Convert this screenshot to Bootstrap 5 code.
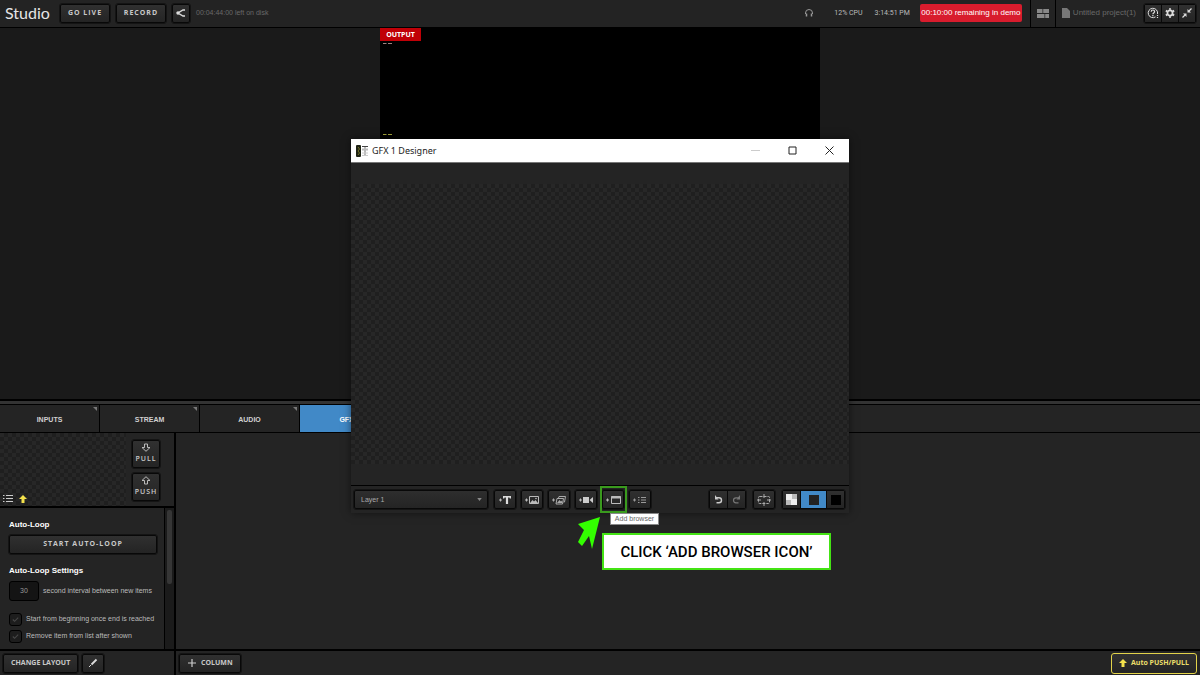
<!DOCTYPE html>
<html lang="en">
<head>
<meta charset="utf-8">
<meta name="viewport" content="width=device-width, initial-scale=1">
<title>Studio</title>
<link href="https://cdn.jsdelivr.net/npm/bootstrap@5.3.0/dist/css/bootstrap.min.css" rel="stylesheet">
<style>
  body { font-family: "Liberation Sans", sans-serif; font-size: 7px; line-height: 10px; color: #bbb; background: #1a1a1a; }
  svg { display: block; flex: none; }
  .topbar { height: 28px; padding-bottom: 1px; background: #232323; border-bottom: 1px solid #000; }
  .topbar-left { gap: 6px; padding-left: 5px; }
  .brand-name { font: 16px/20px Lato, sans-serif; color: #e6e6e6; width: 49px; }
  .topbar-status { gap: 12px; margin-right: 10px; font-family: Roboto, sans-serif; }
  .topbar-project { gap: 3px; margin: 0 8px 0 6px; font-size: 8px; }
  .tool { font: 700 7px/10px "Open Sans", sans-serif; color: #c8c8c8; background: linear-gradient(#303030, #242424); border: 1px solid #080808; border-radius: 2px; padding: 0; display: flex; align-items: center; justify-content: center; height: 19px; gap: 4px; outline: 1px solid #141414; }
  .tracked { letter-spacing: 1px; }
  .w-live { width: 50px; }
  .w-icon { width: 18px; }
  .w-tool { width: 22px; }
  .dim { color: #696969; }
  .demo { font-size: 8px; line-height: 18px; color: #fff; background: #d81c2d; border-radius: 2px; width: 102px; }
  .top-cell { width: 26px; border-left: 1px solid #000; border-right: 1px solid #000; margin-bottom: -1px; }
  .group { border: 1px solid #080808; border-radius: 2px; display: flex; background: #080808; gap: 1px; outline: 1px solid #141414; }
  .group .tool { border: 0; border-radius: 0; outline: 0; height: 17px; width: 17px; }
  .group .slim { width: 16px; }
  .stage { flex: 372 1 0; }
  .output { width: 440px; height: 124px; background: #000; }
  .output-tag { font: 700 7px/13px "Open Sans", sans-serif; color: #fff; background: #c00007; width: 41px; }
  .splitter { height: 6px; background: #333; border-top: 2px solid #000; border-bottom: 1px solid #000; }
  .tabs { height: 28px; background: #242424; border-bottom: 1px solid #000; }
  .tabs button { width: 100px; border: 0; border-right: 1px solid #000; background: #242424; color: #d0d0d0; font: 700 7px/10px "Liberation Sans", sans-serif; position: relative; padding: 3px 0 0; }
  .tabs button::after { content: ""; position: absolute; top: 2px; right: 2px; border: 2px solid #777; border-left-color: transparent; border-bottom-color: transparent; }
  .tabs button.active { background: #4189c7; color: #fff; }
  .work { flex: 217 1 0; background: #242424; min-height: 0; }
  .side { width: 176px; border-right: 2px solid #000; }
  .checker { background: conic-gradient(#1f1f1f 25%, #272727 0 50%, #1f1f1f 0 75%, #272727 0) 0 0 / 8px 8px; }
  .preview { height: 75px; border-bottom: 2px solid #000; }
  .preview .checker { width: 126px; gap: 6px; padding: 0 0 3px 3px; }
  .preview-actions { gap: 5px; padding: 7px 0 0 6px; }
  .preview .tool { width: 28px; height: 28px; flex-direction: column; gap: 2px; font-weight: 600; }
  .settings { min-height: 0; }
  .settings-body { padding: 12px 7px 0 9px; }
  .settings h2 { font-size: 8px; line-height: 10px; font-weight: 700; color: #fff; margin: 0; }
  .start { margin: 5px 0 12px; }
  .num { width: 30px; height: 20px; background: #141414; border: 1px solid #000; border-radius: 3px; color: #999; font-size: 7px; text-align: center; padding: 0; }
  .field { gap: 4px; margin-top: 5px; margin-bottom: 12px; }
  .tick { appearance: none; width: 13px; height: 13px; margin: 0; border: 1px solid #000; border-radius: 3px; background: #1d1d1d url("data:image/svg+xml,%3Csvg xmlns='http://www.w3.org/2000/svg' viewBox='0 0 10 10'%3E%3Cpath d='M2 5l2 2 4-4' fill='none' stroke='%23484848' stroke-width='1.2'/%3E%3C/svg%3E") center / 9px no-repeat; }
  .track { width: 10px; background: #1b1b1b; border-left: 1px solid #000; padding: 2px 2px 0 2px; }
  .thumb { height: 74px; background: #363636; border-radius: 2px; }
  .bottom { height: 26px; background: #242424; border-top: 2px solid #000; }
  .bottom .side, .bottom .main-actions { padding: 0 3px; }
  .bottom .tool { padding: 0 7px; }
  .bottom .w-tool, .bottom .auto { padding: 0; }
  .auto { width: 86px; height: 21px; border: 1px solid #e2d34a; color: #ecdf6a; outline: 0; border-radius: 3px; }
  .layer-over { position: absolute; top: 139px; left: 0; right: 0; pointer-events: none; }
  .designer { width: 498px; position: relative; background: #242424; pointer-events: auto; box-shadow: 0 0 8px rgba(0,0,0,.5); }
  .titlebar { height: 24px; background: #fff; color: #222; font: 9px/23px "Noto Sans", sans-serif; border-bottom: 1px solid #777; padding: 0 1px 0 5px; }
  .titlebar button { border: 0; background: none; padding: 0; width: 37px; height: 23px; display: flex; align-items: center; justify-content: center; }
  .canvas { height: 280px; margin: 21px 0; }
  .designbar { height: 28px; border-top: 1px solid #000; padding: 0 4px 0 3px; }
  .add-tools { gap: 5px; margin-left: 6px; }
  .right-tools { gap: 7px; }
  .layer-pick { width: 134px; height: 19px; color: #aaa; font-size: 7px; line-height: 10px; padding: 0 6px; border: 1px solid #080808; border-radius: 2px; outline: 1px solid #141414; appearance: none; background: url("data:image/svg+xml,%3Csvg xmlns='http://www.w3.org/2000/svg' viewBox='0 0 6 4'%3E%3Cpath d='M0 0h6L3 4z' fill='%23888'/%3E%3C/svg%3E") right 5px center / 5px 3px no-repeat, linear-gradient(#2e2e2e, #242424); }
  .ring { position: absolute; left: 249px; top: 347px; width: 27px; height: 27px; border: 2px solid #3a9a1e; }
  .tip-box { position: absolute; left: 259px; top: 374px; width: 49px; height: 12px; background: #fff; border: 1px solid #888; color: #666; text-align: center; }
  .pointer { position: absolute; left: 226px; top: 378px; }
  .callout-box { position: absolute; left: 251px; top: 394px; width: 229px; height: 37px; border: 2px solid #44e314; background: #fff; color: #000; font: 500 15px/34px Roboto, sans-serif; text-align: center; white-space: nowrap; }
  .group .shade { width: 25px; }
  .group .shade.active { background: #4189c7; }
</style>
</head>
<body>
<div class="vh-100 d-flex flex-column position-relative overflow-hidden">
  <header class="topbar d-flex align-items-center">
    <div class="topbar-left d-flex align-items-center">
      <span class="brand-name text-nowrap">Studio</span>
      <button class="tool tracked w-live" type="button">GO LIVE</button>
      <button class="tool tracked w-live" type="button">RECORD</button>
      <button class="tool w-icon" type="button" aria-label="Share">
        <svg width="10" height="10" viewBox="0 0 10 10" fill="none" stroke="#ddd" stroke-width="1.4"><path d="M9 2H7L2 5l5 3h2"/><circle cx="2" cy="5" r="1" fill="#ddd"/></svg>
      </button>
      <span class="dim text-nowrap">00:04:44:00 left on disk</span>
    </div>
    <div class="ms-auto d-flex align-items-center align-self-stretch">
      <div class="topbar-status d-flex align-items-center">
        <svg class="me-2" width="10" height="10" viewBox="0 0 10 10" fill="none" stroke="#999" stroke-width="1"><path d="M1.500 6V5a3.500 3.500 0 017 0v1"/><path d="M2.500 5.500v3M7.500 5.500v3" stroke-width="1.500"/></svg>
        <span class="text-nowrap">12% CPU</span>
        <span class="text-nowrap">3:14:51 PM</span>
      </div>
      <span class="demo text-center text-nowrap me-2">00:10:00 remaining in demo</span>
      <span class="top-cell align-self-stretch d-flex align-items-center justify-content-center">
        <svg width="12" height="9" viewBox="0 0 12 9" fill="#888"><path d="M0 0h5.500v4H0zM6.200 0H12v4H6.200zM0 5h7.500v4H0zM8.200 5H12v4H8.200z"/></svg>
      </span>
      <div class="topbar-project d-flex align-items-center">
        <svg width="8" height="10" viewBox="0 0 8 10" fill="#777"><path d="M0 0h5l3 3v7H0z"/></svg>
        <span class="dim text-nowrap">Untitled project(1)</span>
      </div>
      <div class="group me-1">
        <button class="tool slim" type="button" aria-label="Help"><svg width="12" height="12" viewBox="0 0 12 12" fill="none" stroke="#ddd"><path d="M8.500 9.900A4.700 4.700 0 1110.500 7"/><path d="M4.200 4.700C4.200 2.400 7.600 2.500 7.600 4.600 7.600 6 5.900 5.900 5.900 7.200M5.900 8v1.200M10.500 8v1M10.500 10v1" stroke-width="1.200"/></svg></button>
        <button class="tool slim" type="button" aria-label="Settings"><svg width="10" height="10" viewBox="0 0 10 10" fill="none" stroke="#ddd"><circle cx="5" cy="5" r="2.600" stroke-width="1.800"/><path d="M5 .2v1.600M5 8.200v1.600M.9 2.600l1.300.8M7.800 6.600l1.300.8M.9 7.400l1.300-.8M7.800 3.400l1.300-.8" stroke-width="2"/></svg></button>
        <button class="tool slim" type="button" aria-label="Shrink"><svg width="10" height="10" viewBox="0 0 10 10" fill="#ddd" stroke="#ddd"><path d="M9.500.5L7 3M.5 9.500L3 7" fill="none" stroke-width="1.300"/><path d="M5.500 1v3.500H9zM1 5.500h3.500V9z" stroke="none"/></svg></button>
      </div>
    </div>
  </header>

  <section class="stage">
    <div class="output mx-auto d-flex flex-column align-items-start">
      <span class="output-tag text-center">OUTPUT</span>
      <svg width="12" height="7" viewBox="0 0 12 7"><path d="M3 2.500h3.500M8 2.500h4" stroke="#a08080"/></svg>
      <svg class="mt-auto" width="12" height="19" viewBox="0 0 12 19"><path d="M3 1.500h3.500M8 1.500h4" stroke="#a5a53c"/></svg>
    </div>
  </section>

  <div class="splitter"></div>
  <nav class="tabs d-flex">
    <button type="button">INPUTS</button>
    <button type="button">STREAM</button>
    <button type="button">AUDIO</button>
    <button type="button" class="active">GFX 1</button>
  </nav>

  <main class="work d-flex">
    <aside class="side d-flex flex-column">
      <div class="preview d-flex">
        <div class="checker d-flex align-items-end">
          <svg width="10" height="9" viewBox="0 0 10 9" stroke="#ccc"><path d="M0 1.500h1.500M3 1.500h7M0 4.500h1.500M3 4.500h7M0 7.500h1.500M3 7.500h7"/></svg>
          <svg width="8" height="8" viewBox="0 0 8 8" fill="#f4e24c"><path d="M4 0l4 4H5.500v4h-3V4H0z"/></svg>
        </div>
        <div class="preview-actions d-flex flex-column">
          <button class="tool tracked" type="button"><svg width="10" height="9" viewBox="0 0 10 9" fill="none" stroke="#bbb"><path d="M3.500 1h3v3.500H9L5 8.300 1 4.500h2.500z"/></svg>PULL</button>
          <button class="tool tracked" type="button"><svg width="10" height="9" viewBox="0 0 10 9" fill="none" stroke="#bbb"><path d="M3.500 8h3V4.500H9L5 .7 1 4.500h2.500z"/></svg>PUSH</button>
        </div>
      </div>
      <div class="settings d-flex flex-fill">
        <div class="settings-body flex-fill d-flex flex-column">
          <h2>Auto-Loop</h2>
          <button class="tool tracked start" type="button">START AUTO-LOOP</button>
          <h2>Auto-Loop Settings</h2>
          <div class="field d-flex align-items-center">
            <input class="num" id="interval" type="text" value="30">
            <label for="interval" class="text-nowrap">second interval between new items</label>
          </div>
          <div class="d-flex align-items-center gap-1 mb-1">
            <input class="tick" id="restart" type="checkbox" checked>
            <label for="restart" class="text-nowrap">Start from beginning once end is reached</label>
          </div>
          <div class="d-flex align-items-center gap-1">
            <input class="tick" id="remove" type="checkbox" checked>
            <label for="remove" class="text-nowrap">Remove item from list after shown</label>
          </div>
        </div>
        <div class="track"><div class="thumb"></div></div>
      </div>
    </aside>
  </main>

  <footer class="bottom d-flex">
    <div class="side d-flex align-items-center gap-1">
      <button class="tool" type="button">CHANGE LAYOUT</button>
      <button class="tool w-tool" type="button" aria-label="Edit"><svg width="10" height="10" viewBox="0 0 10 10" stroke="#ddd"><path d="M8.500 1.500L3.500 6.500" stroke-width="1.800"/><path d="M3 7L1 9" /></svg></button>
    </div>
    <div class="main-actions d-flex align-items-center justify-content-between flex-fill">
      <button class="tool" type="button"><svg width="10" height="10" viewBox="0 0 10 10" stroke="#ccc" stroke-width="1.200"><path d="M5 1v8M1 5h8"/></svg>COLUMN</button>
      <button class="tool auto" type="button"><svg width="8" height="8" viewBox="0 0 8 8" fill="#f4e24c"><path d="M4 0l4 4H5.500v4h-3V4H0z"/></svg>Auto PUSH/PULL</button>
    </div>
  </footer>

  <div class="layer-over d-flex justify-content-center">
    <div class="designer">
      <div class="titlebar d-flex align-items-center">
        <svg class="me-1" width="12" height="12" viewBox="0 0 12 12"><rect width="5" height="12" rx="1" fill="#1e2213"/><path d="M2 2l1.500 2-1.500 2 1.500 2L2 10" stroke="#77772e" fill="none"/><path d="M6 1.500h6" stroke="#444"/><path d="M9 2v9M6 4.500h6" stroke="#bbb" stroke-width="2"/><path d="M6 8h6M6 10.500h6" stroke="#ccc"/></svg>
        <span class="me-auto">GFX 1 Designer</span>
        <button type="button" aria-label="Minimize"><svg width="9" height="9" viewBox="0 0 9 9" stroke="#ccc"><path d="M0 4.500h9"/></svg></button>
        <button type="button" aria-label="Maximize"><svg width="9" height="9" viewBox="0 0 9 9" fill="none" stroke="#222"><path d="M1 1h7v7H1z"/></svg></button>
        <button type="button" aria-label="Close"><svg width="9" height="9" viewBox="0 0 9 9" stroke="#222"><path d="M.5.5l8 8M8.500.5l-8 8"/></svg></button>
      </div>
      <div class="canvas checker"></div>
      <div class="designbar d-flex align-items-center">
        <select class="layer-pick" aria-label="Layer"><option>Layer 1</option></select>
        <div class="add-tools d-flex">
          <button class="tool w-tool" type="button" aria-label="Add text"><svg width="14" height="10" viewBox="0 0 14 10" fill="#ddd"><path d="M1 5h3M2.500 3.500v3" stroke="#bbb"/><path d="M5 1h8v2.500h-1.200l-.4-1h-1.300V9H7.900V2.500H6.600l-.4 1H5z"/></svg></button>
          <button class="tool w-tool" type="button" aria-label="Add image"><svg width="14" height="10" viewBox="0 0 14 10" fill="none" stroke="#bbb"><path d="M0 5h3M1.500 3.500v3M4.500 1.500h9v7h-9z"/><path d="M5 8l2.500-3L9 6.500 10.500 5 13 8z" fill="#bbb" stroke="none"/><circle cx="11" cy="3.500" r=".8" fill="#bbb" stroke="none"/></svg></button>
          <button class="tool w-tool" type="button" aria-label="Add slideshow"><svg width="14" height="10" viewBox="0 0 14 10" fill="none" stroke="#aaa"><path d="M0 5h3M1.500 3.500v3M5 3.500h6.500L10.500 9H4zM6.500 3l.5-1.500h6.500L12.500 7H11.500"/><path d="M5 8l2.500-3L9 6.500 10 5.500 10.500 8z" fill="#aaa" stroke="none"/></svg></button>
          <button class="tool w-tool" type="button" aria-label="Add video"><svg width="14" height="10" viewBox="0 0 14 10" fill="#ccc"><path d="M0 5h3M1.500 3.500v3" stroke="#bbb"/><path d="M4 2h6v6H4zM10.500 5L14 2v6z"/></svg></button>
          <button class="tool w-tool" type="button" aria-label="Add browser"><svg width="15" height="10" viewBox="0 0 15 10" fill="none" stroke="#bbb"><path d="M0 5h3M1.500 3.500v3M5.500 1.500h9v7h-9z"/><path d="M5 2.500h10" stroke-width="2"/></svg></button>
          <button class="tool w-tool" type="button" aria-label="Add list"><svg width="14" height="10" viewBox="0 0 14 10" stroke="#999"><path d="M0 5h3M1.500 3.500v3M5 2.500h1.500M8 2.500h5M5 5h1.500M8 5h5M5 7.500h1.500M8 7.500h5"/></svg></button>
        </div>
        <div class="right-tools d-flex ms-auto">
          <div class="group">
            <button class="tool" type="button" aria-label="Undo"><svg width="9" height="9" viewBox="0 0 9 9" fill="none" stroke="#ccc" stroke-width="1.400"><path d="M2 2.800h3a2.500 2.500 0 010 5H2.500"/><path d="M1 0v4.500h3.500z" fill="#ccc" stroke="none"/></svg></button>
            <button class="tool" type="button" aria-label="Redo"><svg width="9" height="9" viewBox="0 0 9 9" fill="none" stroke="#777" stroke-width="1.200"><path d="M7 2.800H4a2.500 2.500 0 000 5h2.500"/><path d="M8 0v4.500H4.500z" fill="#777" stroke="none"/></svg></button>
          </div>
          <button class="tool w-tool" type="button" aria-label="Safe area"><svg width="14" height="12" viewBox="0 0 14 12" fill="none" stroke="#aaa"><rect x="1.500" y="2.500" width="11" height="7" rx="1" stroke-dasharray="3 1"/><path d="M7 0v4M7 8v4M0 6h4M10 6h4"/></svg></button>
          <div class="group">
            <button class="tool" type="button" aria-label="Checkered"><svg width="11" height="11" viewBox="0 0 11 11"><path fill="#eee" d="M0 0h11v11H0z"/><path fill="#bbb" d="M6 0h5v5H6zM0 6h5v5H0z"/></svg></button>
            <button class="tool shade active" type="button" aria-label="Dark"><svg width="10" height="10" viewBox="0 0 10 10"><path fill="#222" d="M0 0h10v10H0z"/></svg></button>
            <button class="tool" type="button" aria-label="Black"><svg width="10" height="10" viewBox="0 0 10 10"><path d="M0 0h10v10H0z"/></svg></button>
          </div>
        </div>
      </div>
      <div class="ring"></div>
      <div class="tip-box">Add browser</div>
      <svg class="pointer" width="24" height="34" viewBox="0 0 24 34"><path fill="#3f0" d="M23 0L1 7l6 6-6 12 4 4 7-10 3 13z"/></svg>
      <div class="callout-box">CLICK ‘ADD BROWSER ICON’</div>
    </div>
  </div>
</div>
<script src="https://cdn.jsdelivr.net/npm/bootstrap@5.3.0/dist/js/bootstrap.bundle.min.js"></script>
</body>
</html>
